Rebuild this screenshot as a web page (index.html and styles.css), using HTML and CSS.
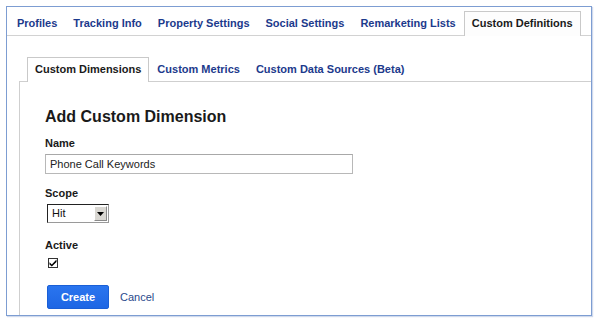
FILE: index.html
```html
<!DOCTYPE html>
<html>
<head>
<meta charset="utf-8">
<link rel="stylesheet" href="styles.css">
</head>
<body>
<div class="frame">
  <div class="tabbar">
    <div class="tab">Profiles</div>
    <div class="tab">Tracking Info</div>
    <div class="tab">Property Settings</div>
    <div class="tab">Social Settings</div>
    <div class="tab">Remarketing Lists</div>
    <div class="tab active">Custom Definitions</div>
  </div>
  <div class="content">
    <div class="subtabs">
      <div class="tab active">Custom Dimensions</div>
      <div class="tab">Custom Metrics</div>
      <div class="tab">Custom Data Sources (Beta)</div>
    </div>
    <div class="panel">
      <h1 class="heading">Add Custom Dimension</h1>
      <div class="label">Name</div>
      <input class="textfield" type="text" value="Phone Call Keywords">
      <div class="label label-gap">Scope</div>
      <div class="select">
        <span class="select-value">Hit</span>
        <span class="select-btn">
          <svg width="7" height="4" viewBox="0 0 7 4"><path d="M0 0h7L3.5 4z" fill="#000"/></svg>
        </span>
      </div>
      <div class="label label-gap2">Active</div>
      <div class="checkbox">
        <svg width="8" height="8" viewBox="0 0 8 8"><path d="M0.5 3.2l2.3 2.2L7.5 0.6v2.3L2.8 7.6 0.5 5.4z" fill="#000"/></svg>
      </div>
      <div class="actions">
        <button class="btn-create" type="button">Create</button>
        <span class="cancel">Cancel</span>
      </div>
    </div>
  </div>
</div>
</body>
</html>
```

FILE: styles.css
```css
html, body {
  margin: 0;
  padding: 0;
  background: #fff;
}
body {
  font-family: "Liberation Sans", Arial, sans-serif;
  font-size: 11px;
  color: #222;
}
.frame {
  box-sizing: border-box;
  margin: 6px;
  width: 586px;
  height: 310px;
  border: 1px solid #7d9dd2;
  box-shadow: 1px 1px 1px rgba(120, 150, 200, 0.35);
  display: flex;
  flex-direction: column;
  overflow: hidden;
}
.tabbar {
  display: flex;
  align-items: flex-start;
  padding: 4px 0 0 2px;
  height: 24px;
  box-sizing: content-box;
  border-bottom: 1px solid #d2d2d2;
}
.tab {
  box-sizing: border-box;
  height: 24px;
  padding: 0 7px;
  border: 1px solid transparent;
  border-bottom: 0;
  line-height: 22px;
  font-weight: bold;
  color: #1c3a8c;
  white-space: nowrap;
}
.tab.active {
  height: 25px;
  margin-bottom: -1px;
  background: #fff;
  border-color: #c9c9c9;
  color: #1a1a1a;
}
.tabbar .tab.active {
  background: #fdfdfd;
}
.content {
  flex: 1;
  display: flex;
  flex-direction: column;
  padding: 21px 0 0 12px;
}
.subtabs {
  display: flex;
  align-items: flex-start;
  height: 24px;
  padding-left: 8px;
  border-bottom: 1px solid #cfcfcf;
}
.panel {
  flex: 1;
  border-left: 1px solid #cfcfcf;
  padding: 26px 0 0 25px;
  display: flex;
  flex-direction: column;
  align-items: flex-start;
}
.heading {
  margin: 0 0 10px;
  font-size: 16px;
  line-height: 18px;
  font-weight: bold;
  color: #1a1a1a;
}
.label {
  font-weight: bold;
  line-height: 14px;
  color: #1a1a1a;
  margin-bottom: 4px;
}
.label-gap {
  margin-top: 12px;
}
.label-gap2 {
  margin-top: 15px;
  margin-bottom: 6px;
}
.textfield {
  box-sizing: border-box;
  width: 308px;
  height: 20px;
  margin: 0;
  padding: 0 4px;
  border: 1px solid #b8b8b8;
  border-top-color: #a8a8a8;
  font-family: "Liberation Sans", Arial, sans-serif;
  font-size: 11px;
  color: #222;
  outline: none;
}
.select {
  box-sizing: border-box;
  width: 62px;
  height: 19px;
  margin-left: 2px;
  display: flex;
  border: 1px solid #9a9a9a;
  border-top-color: #222;
  border-left-color: #222;
  background: #fff;
}
.select-value {
  flex: 1;
  padding-left: 4px;
  line-height: 17px;
  font-size: 11px;
  color: #111;
}
.select-btn {
  box-sizing: border-box;
  width: 13px;
  margin: 1px 1px 1px 0;
  background: #d9d7d2;
  border: 1px solid #fff;
  border-right-color: #8a8a8a;
  border-bottom-color: #8a8a8a;
  display: flex;
  align-items: center;
  justify-content: center;
}
.checkbox {
  box-sizing: border-box;
  width: 10px;
  height: 10px;
  margin-left: 3px;
  border: 1px solid #333;
  background: #fff;
  display: flex;
  align-items: center;
  justify-content: center;
}
.checkbox svg {
  display: block;
}
.actions {
  margin-top: 17px;
  margin-left: 2px;
  display: flex;
  align-items: center;
  gap: 11px;
}
.btn-create {
  box-sizing: border-box;
  width: 62px;
  height: 24px;
  margin: 0;
  padding: 0;
  border: 1px solid #1a5fd6;
  border-radius: 2px;
  background: linear-gradient(#2a75ef, #1e66e4);
  color: #fff;
  font-family: "Liberation Sans", Arial, sans-serif;
  font-size: 11px;
  font-weight: bold;
}
.cancel {
  color: #2a4a8c;
  font-size: 11px;
  line-height: 14px;
}
```
